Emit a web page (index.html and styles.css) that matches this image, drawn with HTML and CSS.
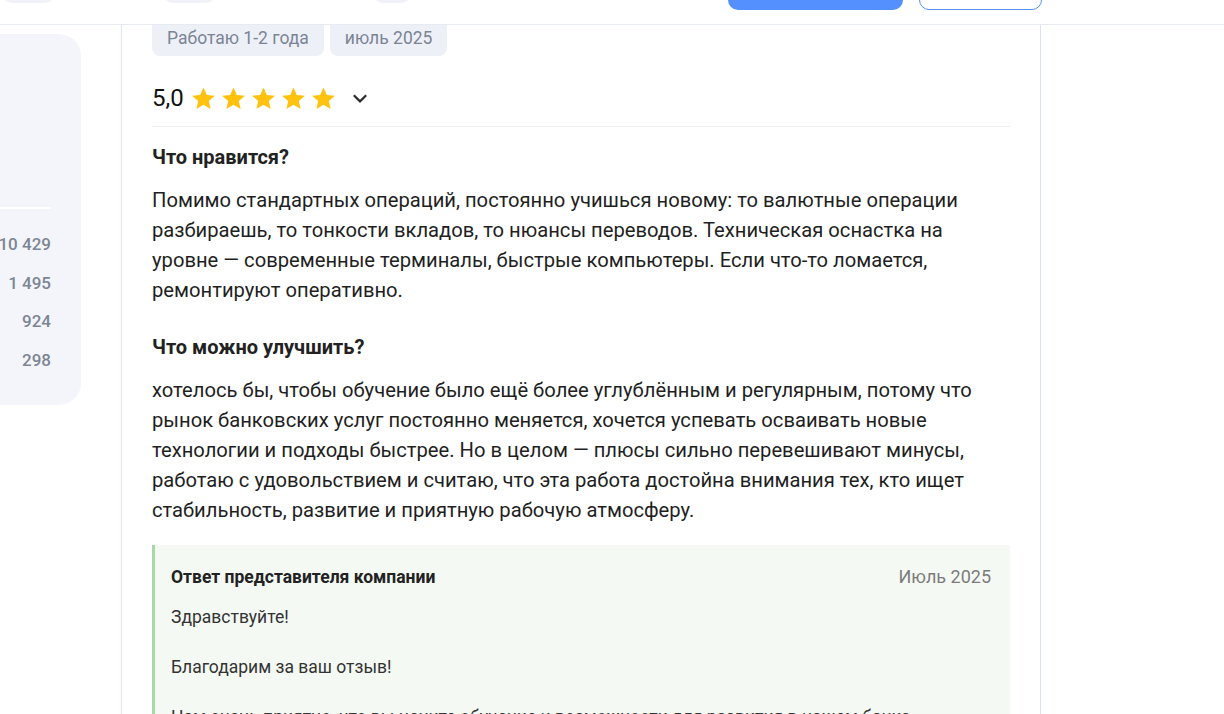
FILE: index.html
```html
<!DOCTYPE html>
<html lang="ru">
<head>
<meta charset="utf-8">
<link rel="stylesheet" href="styles.css">
</head>
<body>
<header class="topbar">
  <div class="pill pill-a"></div>
  <div class="pill pill-b"></div>
  <div class="pill pill-c"></div>
  <div class="spacer"></div>
  <div class="btn btn-primary"></div>
  <div class="btn btn-outline"></div>
</header>
<div class="layout">
  <aside class="side">
    <div class="side-top"></div>
    <div class="side-sep"></div>
    <ul class="counts">
      <li>10 429</li>
      <li>1 495</li>
      <li>924</li>
      <li>298</li>
    </ul>
  </aside>
  <main class="review">
    <div class="tags">
      <span class="tag">Работаю 1-2 года</span>
      <span class="tag">июль 2025</span>
    </div>
    <div class="rating">
      <span class="score">5,0</span>
      <span class="stars">
        <svg class="star" viewBox="0 0 24 24"><path d="M12 2.2l2.95 6.6 7.25.65-5.5 4.8 1.65 7.1L12 17.65l-6.35 3.7 1.65-7.1-5.5-4.8 7.25-.65z"/></svg>
        <svg class="star" viewBox="0 0 24 24"><path d="M12 2.2l2.95 6.6 7.25.65-5.5 4.8 1.65 7.1L12 17.65l-6.35 3.7 1.65-7.1-5.5-4.8 7.25-.65z"/></svg>
        <svg class="star" viewBox="0 0 24 24"><path d="M12 2.2l2.95 6.6 7.25.65-5.5 4.8 1.65 7.1L12 17.65l-6.35 3.7 1.65-7.1-5.5-4.8 7.25-.65z"/></svg>
        <svg class="star" viewBox="0 0 24 24"><path d="M12 2.2l2.95 6.6 7.25.65-5.5 4.8 1.65 7.1L12 17.65l-6.35 3.7 1.65-7.1-5.5-4.8 7.25-.65z"/></svg>
        <svg class="star" viewBox="0 0 24 24"><path d="M12 2.2l2.95 6.6 7.25.65-5.5 4.8 1.65 7.1L12 17.65l-6.35 3.7 1.65-7.1-5.5-4.8 7.25-.65z"/></svg>
      </span>
      <svg class="chev" viewBox="0 0 16 16"><path d="M2.5 5.5l5.5 5.5 5.5-5.5"/></svg>
    </div>
    <h3 class="q">Что нравится?</h3>
    <p class="text">Помимо стандартных операций, постоянно учишься новому: то валютные операции разбираешь, то тонкости вкладов, то нюансы переводов. Техническая оснастка на уровне — современные терминалы, быстрые компьютеры. Если что-то ломается, ремонтируют оперативно.</p>
    <h3 class="q q2">Что можно улучшить?</h3>
    <p class="text">хотелось бы, чтобы обучение было ещё более углублённым и регулярным, потому что рынок банковских услуг постоянно меняется, хочется успевать осваивать новые технологии и подходы быстрее. Но в целом — плюсы сильно перевешивают минусы, работаю с удовольствием и считаю, что эта работа достойна внимания тех, кто ищет стабильность, развитие и приятную рабочую атмосферу.</p>
    <section class="answer">
      <div class="answer-head">
        <span class="answer-title">Ответ представителя компании</span>
        <span class="answer-date">Июль 2025</span>
      </div>
      <p class="answer-p">Здравствуйте!</p>
      <p class="answer-p">Благодарим за ваш отзыв!</p>
      <p class="answer-p">Нам очень приятно, что вы цените обучение и возможности для развития в нашем банке.</p>
    </section>
  </main>
</div>
</body>
</html>
```
FILE: styles.css
```css
* { box-sizing: border-box; }
html, body { margin: 0; padding: 0; }
body {
  width: 1224px;
  height: 714px;
  overflow: hidden;
  background: #ffffff;
  font-family: Roboto, "Noto Sans", Arial, sans-serif;
  color: #1f1f1f;
}
.topbar {
  height: 25px;
  border-bottom: 1px solid #e8eaf2;
  display: flex;
  align-items: flex-end;
  overflow: hidden;
  background: #fff;
  position: relative;
  z-index: 2;
}
.pill {
  height: 40px;
  border-radius: 10px;
  background: #f1f2f8;
  margin-bottom: 21px;
  flex: none;
}
.pill-a { width: 53px; margin-left: 2px; }
.pill-b { width: 53px; margin-left: 108px; }
.pill-c { width: 38px; margin-left: 157px; }
.spacer { flex: 1; }
.btn {
  height: 40px;
  border-radius: 10px;
  margin-bottom: 14px;
  flex: none;
}
.btn-primary { width: 175px; background: #5590ff; }
.btn-outline {
  width: 123px;
  margin-left: 16px;
  margin-right: 182px;
  border: 1px solid #5b8ff5;
  background: #fff;
}
.layout {
  display: flex;
  align-items: flex-start;
  gap: 40px;
}
.side {
  width: 81px;
  flex: none;
  margin-top: 9px;
  height: 371px;
  background: #f4f5fa;
  border-radius: 0 22px 22px 0;
  padding-right: 30px;
}
.side-top { height: 173px; }
.side-sep { height: 2px; background: #ffffff; }
.counts {
  list-style: none;
  margin: 0;
  padding: 25px 0 0;
  font-size: 17px;
  font-weight: 500;
  color: #7c8593;
}
.counts li {
  display: flex;
  justify-content: flex-end;
  white-space: nowrap;
  height: 38.7px;
  line-height: 20px;
}
.review {
  width: 920px;
  flex: none;
  height: 690px;
  border-left: 1px solid #dfe3ee;
  border-right: 1px solid #dfe3ee;
  padding: 0 30px;
}
.tags { display: flex; gap: 6px; }
.tag {
  background: #edf0f7;
  color: #7b8495;
  font-size: 17.5px;
  line-height: 21px;
  padding: 3px 15px 7px;
  border-radius: 0 0 8px 8px;
}
.rating {
  display: flex;
  align-items: center;
  margin-top: 26px;
  padding-bottom: 12px;
  border-bottom: 1px solid #eef0f5;
  box-sizing: content-box;
  height: 32px;
}
.score {
  font-size: 24px;
  color: #111;
  margin-right: 6px;
}
.stars { display: flex; gap: 3px; }
.star { width: 27px; height: 27px; fill: #ffc20e; }
.chev {
  width: 18px;
  height: 18px;
  margin-left: 14px;
  fill: none;
  stroke: #2c2c2c;
  stroke-width: 2;
}
.q {
  margin: 18px 0 0;
  font-size: 20px;
  line-height: 24px;
  font-weight: 700;
  color: #222;
}
.q2 { margin-top: 30px; }
.text {
  margin: 16px 0 0;
  font-size: 20.2px;
  line-height: 30px;
  color: #1f1f1f;
}
.answer {
  margin-top: 20px;
  background: #f4f9f3;
  border-left: 3px solid #a9d8a6;
  padding: 20px 19px 0 16px;
  height: 200px;
}
.answer-head {
  display: flex;
  justify-content: space-between;
  align-items: center;
  line-height: 24px;
}
.answer-title { font-size: 17.5px; font-weight: 700; color: #222; }
.answer-date { font-size: 18px; color: #7c7c7c; }
.answer-p {
  margin: 15px 0 0;
  font-size: 17.5px;
  line-height: 26px;
  color: #333;
}
.answer-p + .answer-p { margin-top: 24px; }
```
